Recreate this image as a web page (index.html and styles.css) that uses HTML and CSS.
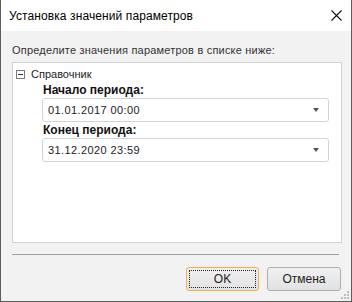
FILE: index.html
```html
<!DOCTYPE html>
<html lang="ru">
<head>
  <meta charset="UTF-8">
  <title>Установка значений параметров</title>
  <link rel="stylesheet" href="styles.css">
</head>
<body>
  <div class="window">
    <div class="titlebar">
      <span class="title">Установка значений параметров</span>
      <svg class="close" width="11" height="11" viewBox="0 0 11 11">
        <path d="M0.5 0.5 L10.5 10.5 M10.5 0.5 L0.5 10.5" stroke="#111" stroke-width="1.1" fill="none"/>
      </svg>
    </div>

    <div class="content">
      <div class="hint">Определите значения параметров в списке ниже:</div>

      <div class="panel">
        <div class="tree-row">
          <span class="toggle"></span>
          <span>Справочник</span>
        </div>

        <div class="params">
          <div class="param-label">Начало периода:</div>
          <div class="combo">
            <span>01.01.2017 00:00</span>
            <span class="arrow"></span>
          </div>

          <div class="param-label">Конец периода:</div>
          <div class="combo">
            <span>31.12.2020 23:59</span>
            <span class="arrow"></span>
          </div>
        </div>
      </div>

      <div class="separator"></div>

      <div class="buttons">
        <button class="btn btn-default"><span class="focus">OK</span></button>
        <button class="btn">Отмена</button>
      </div>
    </div>

    <svg class="grip" width="9" height="9" viewBox="0 0 9 9">
      <rect x="7" y="1" width="2" height="2" fill="#bdbdbd"/>
      <rect x="4" y="4" width="2" height="2" fill="#bdbdbd"/>
      <rect x="7" y="4" width="2" height="2" fill="#bdbdbd"/>
      <rect x="1" y="7" width="2" height="2" fill="#bdbdbd"/>
      <rect x="4" y="7" width="2" height="2" fill="#bdbdbd"/>
      <rect x="7" y="7" width="2" height="2" fill="#bdbdbd"/>
    </svg>
  </div>
</body>
</html>
```

FILE: styles.css
```css
body {
  margin: 0;
  font-family: "Liberation Sans", Arial, sans-serif;
  font-size: 11px;
  color: #1b1b1b;
}

.window {
  position: relative;
  width: 352px;
  height: 302px;
  box-sizing: border-box;
  border: 1px solid #5c5c5c;
  border-top: none;
  display: flex;
  flex-direction: column;
  background-color: #f2f2f2;
}

.titlebar {
  height: 31px;
  background-color: white;
  display: flex;
  align-items: center;
  justify-content: space-between;
  padding: 0 9px 0 8px;
}

.title {
  font-size: 12px;
  letter-spacing: 0.1px;
  color: #000;
}

.close {
  margin-top: -1px;
}

.content {
  flex: 1;
  padding: 12px 9px 0 11px;
  display: flex;
  flex-direction: column;
}

.hint {
  line-height: 14px;
  letter-spacing: 0.2px;
  color: #333;
}

.panel {
  margin-top: 5px;
  height: 181px;
  box-sizing: border-box;
  background-color: white;
  border: 1px solid #d2d2d2;
  padding: 6px 0 0 3px;
}

.tree-row {
  display: flex;
  align-items: center;
  height: 10px;
  gap: 6px;
}

.toggle {
  position: relative;
  width: 9px;
  height: 9px;
  box-sizing: border-box;
  border: 1px solid #7a7a7a;
}

.toggle::after {
  content: "";
  position: absolute;
  left: 1px;
  top: 3px;
  width: 5px;
  height: 1px;
  background-color: #333;
}

.params {
  padding: 5px 12px 0 26px;
}

.param-label {
  font-size: 12px;
  font-weight: bold;
  line-height: 13px;
  color: #111;
  padding-left: 1px;
}

.combo {
  height: 24px;
  box-sizing: border-box;
  border: 1px solid #d4d4d4;
  border-radius: 3px;
  margin: 1px 0 2px 0;
  display: flex;
  align-items: center;
  justify-content: space-between;
  padding: 0 9px 0 5px;
  letter-spacing: 0.4px;
}

.arrow {
  width: 0;
  height: 0;
  border-left: 3.5px solid transparent;
  border-right: 3.5px solid transparent;
  border-top: 4px solid #555;
}

.separator {
  margin-top: 11px;
  height: 1px;
  background-color: #a0a0a0;
  margin-right: 3px;
}

.buttons {
  display: flex;
  justify-content: flex-end;
  gap: 8px;
  margin-top: 12px;
  padding-right: 1px;
}

.btn {
  height: 24px;
  width: 74px;
  font-family: inherit;
  font-size: 12px;
  color: #222;
  background: linear-gradient(#f0f0f0, #e2e2e2);
  border: 1px solid #adadad;
  border-radius: 3px;
  padding: 0;
}

.btn-default {
  width: 73px;
  border-color: #f2b04c;
  padding: 2px;
}

.btn-default .focus {
  display: flex;
  align-items: center;
  justify-content: center;
  height: 100%;
  border: 1px dotted #222;
  box-sizing: border-box;
}

.grip {
  position: absolute;
  right: 2px;
  bottom: 2px;
}
```
